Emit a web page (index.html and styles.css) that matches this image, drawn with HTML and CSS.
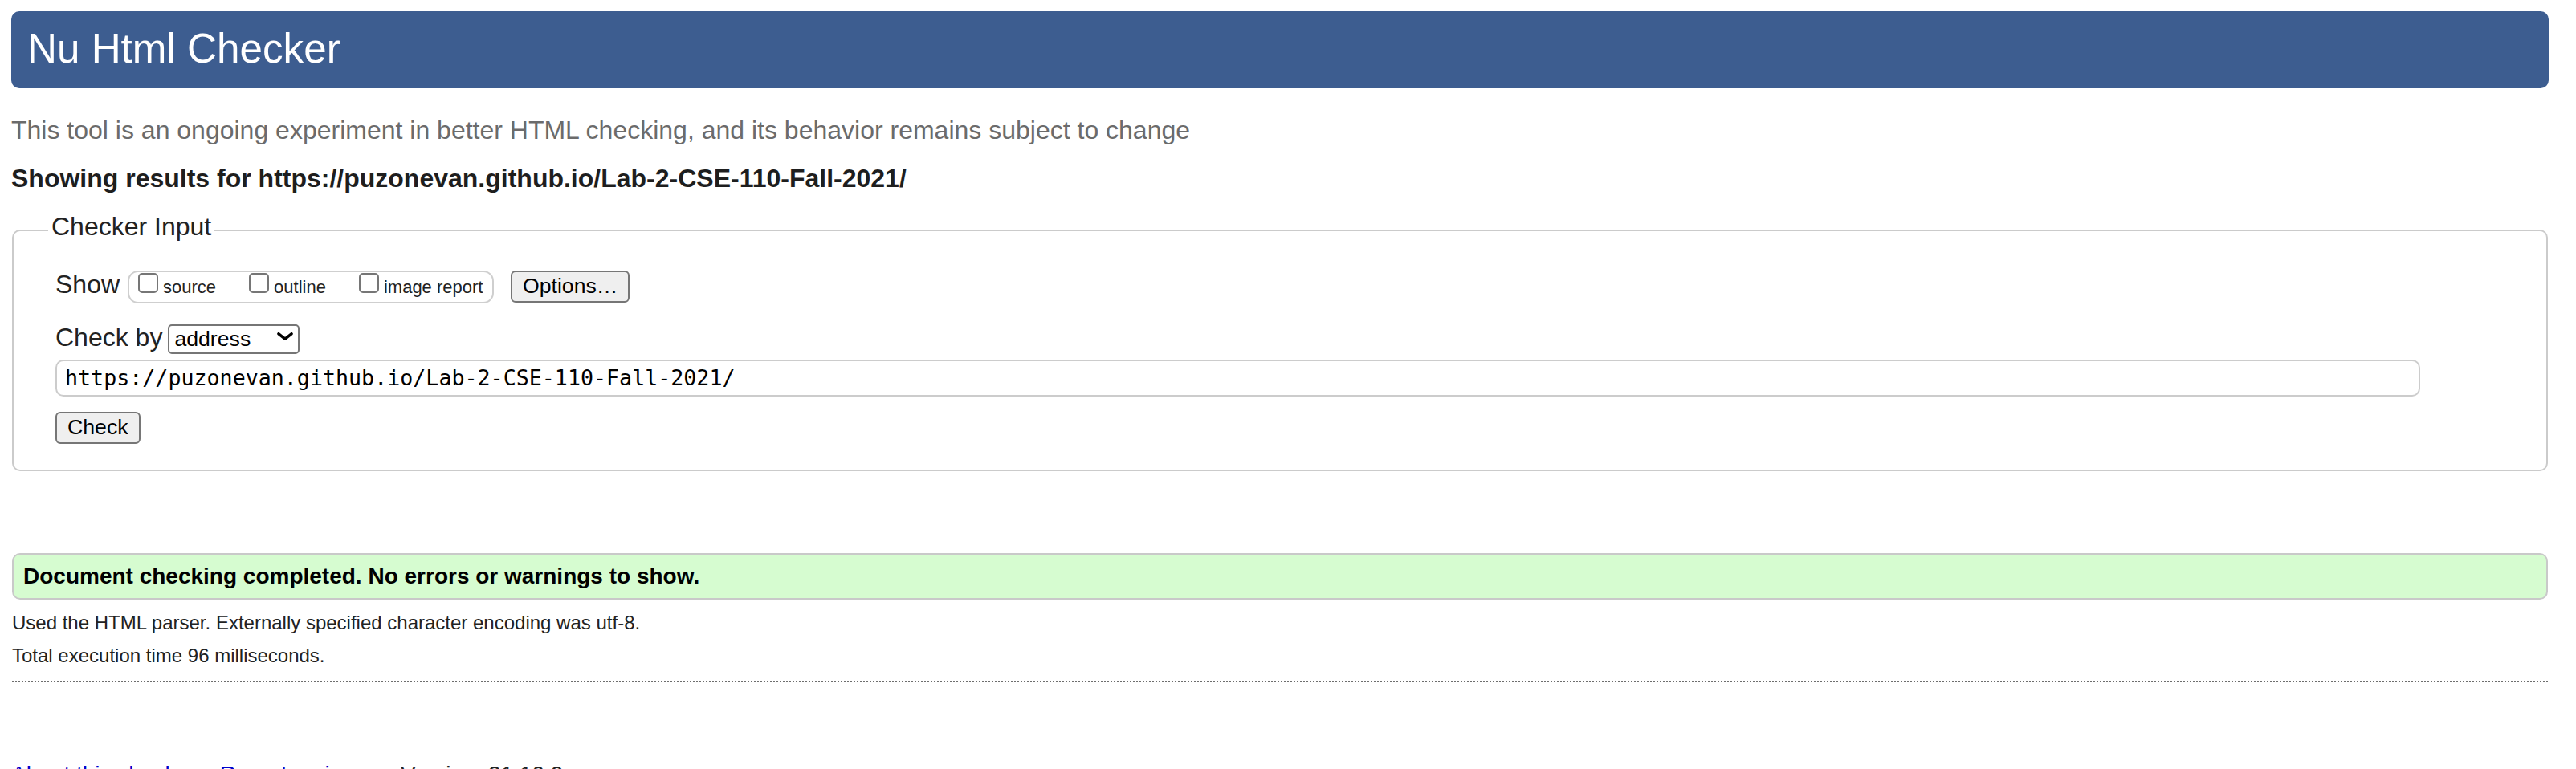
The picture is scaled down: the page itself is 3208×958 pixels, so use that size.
FILE: index.html
```html
<!DOCTYPE html>
<html lang="en">
<head>
<meta charset="utf-8">
<title>Nu Html Checker</title>
<link rel="stylesheet" href="styles.css">
</head>
<body>
<h1 class="title">Nu Html Checker</h1>
<p class="intro">This tool is an ongoing experiment in better HTML checking, and its behavior remains subject to change</p>
<p class="results-for">Showing results for https://puzonevan.github.io/Lab-2-CSE-110-Fall-2021/</p>
<form class="checker">
  <fieldset class="input-set">
    <legend class="legend">Checker Input</legend>
    <div class="row row-show">
      <span class="label">Show</span>
      <span class="opts">
        <label class="opt"><input type="checkbox" class="cb"><span class="opt-text">source</span></label>
        <label class="opt"><input type="checkbox" class="cb"><span class="opt-text">outline</span></label>
        <label class="opt"><input type="checkbox" class="cb"><span class="opt-text">image report</span></label>
      </span>
      <button type="button" class="btn btn-options">Options…</button>
    </div>
    <div class="row row-by">
      <span class="label">Check by</span>
      <span class="select-wrap">
        <select class="select"><option>address</option></select>
        <svg class="chevron" width="20" height="10" viewBox="0 0 20 10" aria-hidden="true"><polyline points="2,1.8 10,8.2 18,1.8" fill="none" stroke="#000" stroke-width="3.6" stroke-linecap="round" stroke-linejoin="round"/></svg>
      </span>
    </div>
    <input class="url" type="text" value="https://puzonevan.github.io/Lab-2-CSE-110-Fall-2021/">
    <div class="row-submit"><button type="button" class="btn btn-check">Check</button></div>
  </fieldset>
</form>
<div class="success"><p class="success-text">Document checking completed. No errors or warnings to show.</p></div>
<p class="meta meta-first">Used the HTML parser. Externally specified character encoding was utf-8.</p>
<p class="meta meta-second">Total execution time 96 milliseconds.</p>
<hr class="dotted">
<p class="footer"><a class="link" href="#">About this checker</a><span class="sep">·</span><a class="link" href="#">Report an issue</a><span class="sep">·</span><span class="version">Version: 21.10.9</span></p>
</body>
</html>
```

FILE: styles.css
```css
html, body {
  background: #fff;
}
body {
  margin: 0;
  padding: 14px 34px 0 14px;
  font-family: "Liberation Sans", Arial, Helvetica, sans-serif;
  font-size: 32px;
  color: #222;
}
.title {
  margin: 0;
  height: 96px;
  box-sizing: border-box;
  padding: 21px 20px;
  background: #3d5d90;
  border-radius: 10px;
  color: #fff;
  font-size: 51.2px;
  font-weight: normal;
  line-height: 51px;
}
.intro {
  margin: 34px 0 0;
  color: #6b6b6b;
  line-height: 36px;
}
.results-for {
  margin: 24px 0 0;
  font-weight: bold;
  line-height: 36px;
  color: #1e1e1e;
}
.checker {
  margin: 0;
}
.input-set {
  margin: 24px 1px 0;
  padding: 26px 20px 32px 52px;
  border: 2px solid #cbcbcb;
  border-radius: 10px;
  min-width: 0;
}
.legend {
  margin-left: -9px;
  padding: 0 4px 10px;
  font-size: 32px;
  line-height: 36px;
}
.row {
  display: flex;
  align-items: baseline;
}
.label {
  line-height: 36px;
}
.opts {
  display: flex;
  align-items: baseline;
  margin-left: 10px;
  padding: 1px 11.5px 5px 11px;
  border: 2px solid #cfcfcf;
  border-radius: 13px;
}
.opt {
  display: inline-flex;
  align-items: baseline;
  margin-right: 41px;
}
.opt:last-child {
  margin-right: 0;
}
.cb {
  appearance: none;
  -webkit-appearance: none;
  width: 25px;
  height: 25px;
  margin: 0 6px 0 0;
  box-sizing: border-box;
  border: 2px solid #767676;
  border-radius: 5px;
  background: #fff;
}
.opt-text {
  font-size: 22px;
  color: #222;
}
.btn {
  font-family: "Liberation Sans", Arial, Helvetica, sans-serif;
  font-size: 26.67px;
  line-height: 30px;
  padding: 2px 13px 4px;
  color: #000;
  background: #efefef;
  border: 2px solid #767676;
  border-radius: 6px;
}
.btn-options {
  margin-left: 21px;
}
.row-by {
  margin-top: 24px;
}
.select-wrap {
  position: relative;
  display: inline-block;
  margin-left: 7px;
}
.select {
  appearance: none;
  -webkit-appearance: none;
  width: 164px;
  height: 37px;
  box-sizing: border-box;
  padding: 0 40px 0 6px;
  font-family: "Liberation Sans", Arial, Helvetica, sans-serif;
  font-size: 26.67px;
  color: #000;
  background: #fff;
  border: 2px solid #767676;
  border-radius: 5px;
}
.chevron {
  position: absolute;
  right: 8px;
  top: 12px;
}
.url {
  display: block;
  width: 2945px;
  height: 46px;
  box-sizing: border-box;
  margin: 7px 0 0;
  padding: 0 10px;
  font-family: "DejaVu Sans Mono", "Liberation Mono", monospace;
  font-size: 26.67px;
  color: #000;
  border: 2px solid #cccccc;
  border-radius: 10px;
  background: #fff;
}
.row-submit {
  margin-top: 18px;
}
.success {
  margin: 102px 1px 0;
  padding: 11px 12px;
  background: #d6fcd0;
  border: 2px solid #c9c9c9;
  border-radius: 10px;
}
.success-text {
  margin: 0;
  font-size: 28px;
  font-weight: bold;
  line-height: 32px;
  color: #000;
}
.meta {
  margin: 0 1px;
  font-size: 24px;
  line-height: 28px;
  color: #222;
}
.meta-first {
  margin-top: 15px;
}
.meta-second {
  margin-top: 13px;
}
.dotted {
  height: 0;
  margin: 17px 1px 0;
  border: 0;
  border-top: 2px dotted #6e6e6e;
}
.footer {
  margin: 99px 0 0;
  font-size: 28px;
  line-height: 32px;
  color: #222;
}
.link {
  color: #0000cc;
  text-decoration: none;
}
.sep {
  padding: 0 10px;
  color: #888;
}
```
